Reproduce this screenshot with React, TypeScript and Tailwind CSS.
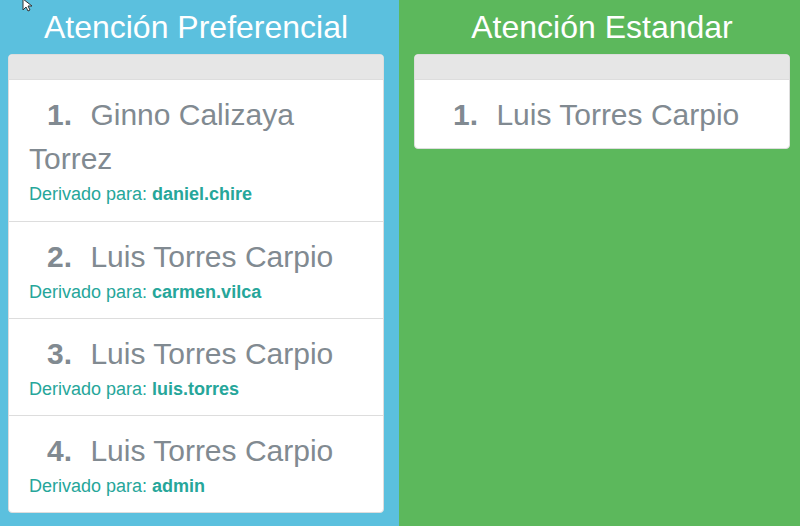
const preferencial = [
	{ name: "Ginno Calizaya Torrez", user: "daniel.chire" },
	{ name: "Luis Torres Carpio", user: "carmen.vilca" },
	{ name: "Luis Torres Carpio", user: "luis.torres" },
	{ name: "Luis Torres Carpio", user: "admin" },
];

const estandar = [{ name: "Luis Torres Carpio", user: "" }];

type Turno = { name: string; user: string };

const Item = ({ turno, index, first }: { turno: Turno; index: number; first: boolean }) => {
	const pb = !turno.user ? "pb-[11px]" : first ? "pb-[14px]" : "pb-[13px]";
	return (
		<li className={`pl-[20px] pr-[15px] pt-[13px] ${pb} ${first ? "" : "border-t border-[#ddd]"}`}>
			<div className="indent-[18px] text-[30px] leading-[44px] text-[#818a91]">
				<span className="font-bold mr-[10px]">{index + 1}.</span> {turno.name}
			</div>
			{turno.user && (
				<div className="text-[18px] leading-[26px] text-[#26a69a]">
					Derivado para: <span className="font-bold">{turno.user}</span>
				</div>
			)}
		</li>
	);
};

const Columna = ({ title, turnos, className }: { title: string; turnos: Turno[]; className: string }) => {
	return (
		<div className={`flex flex-col ${className}`}>
			<h2 className="h-[54px] pt-[5px] text-center text-[32px] leading-[44px] text-white">{title}</h2>
			<div className="rounded-[4px] border border-[#ddd] bg-white overflow-hidden">
				<div className="h-[25px] bg-[#e6e6e6] border-b border-[#ddd]" />
				<ol>
					{turnos.map((t, i) => (
						<Item key={i} turno={t} index={i} first={i === 0} />
					))}
				</ol>
			</div>
		</div>
	);
};

export default function App() {
	return (
		<div className="relative flex h-[526px] w-[800px] overflow-hidden font-['Liberation_Sans',Arial,sans-serif]">
			<Columna
				title="Atención Preferencial"
				turnos={preferencial}
				className="w-[399px] bg-[#5bc0de] pl-[8px] pr-[15px]"
			/>
			<Columna
				title="Atención Estandar"
				turnos={estandar}
				className="w-[401px] bg-[#5cb85c] pl-[15px] pr-[10px]"
			/>
			<svg className="absolute left-[22px] top-[-2px]" width="12" height="14" viewBox="0 0 12 14">
				<path d="M1 1 L1 12 L4 9 L6 13 L8 12 L6 8 L10 8 Z" fill="white" stroke="#333" strokeWidth="1" />
			</svg>
		</div>
	);
}
